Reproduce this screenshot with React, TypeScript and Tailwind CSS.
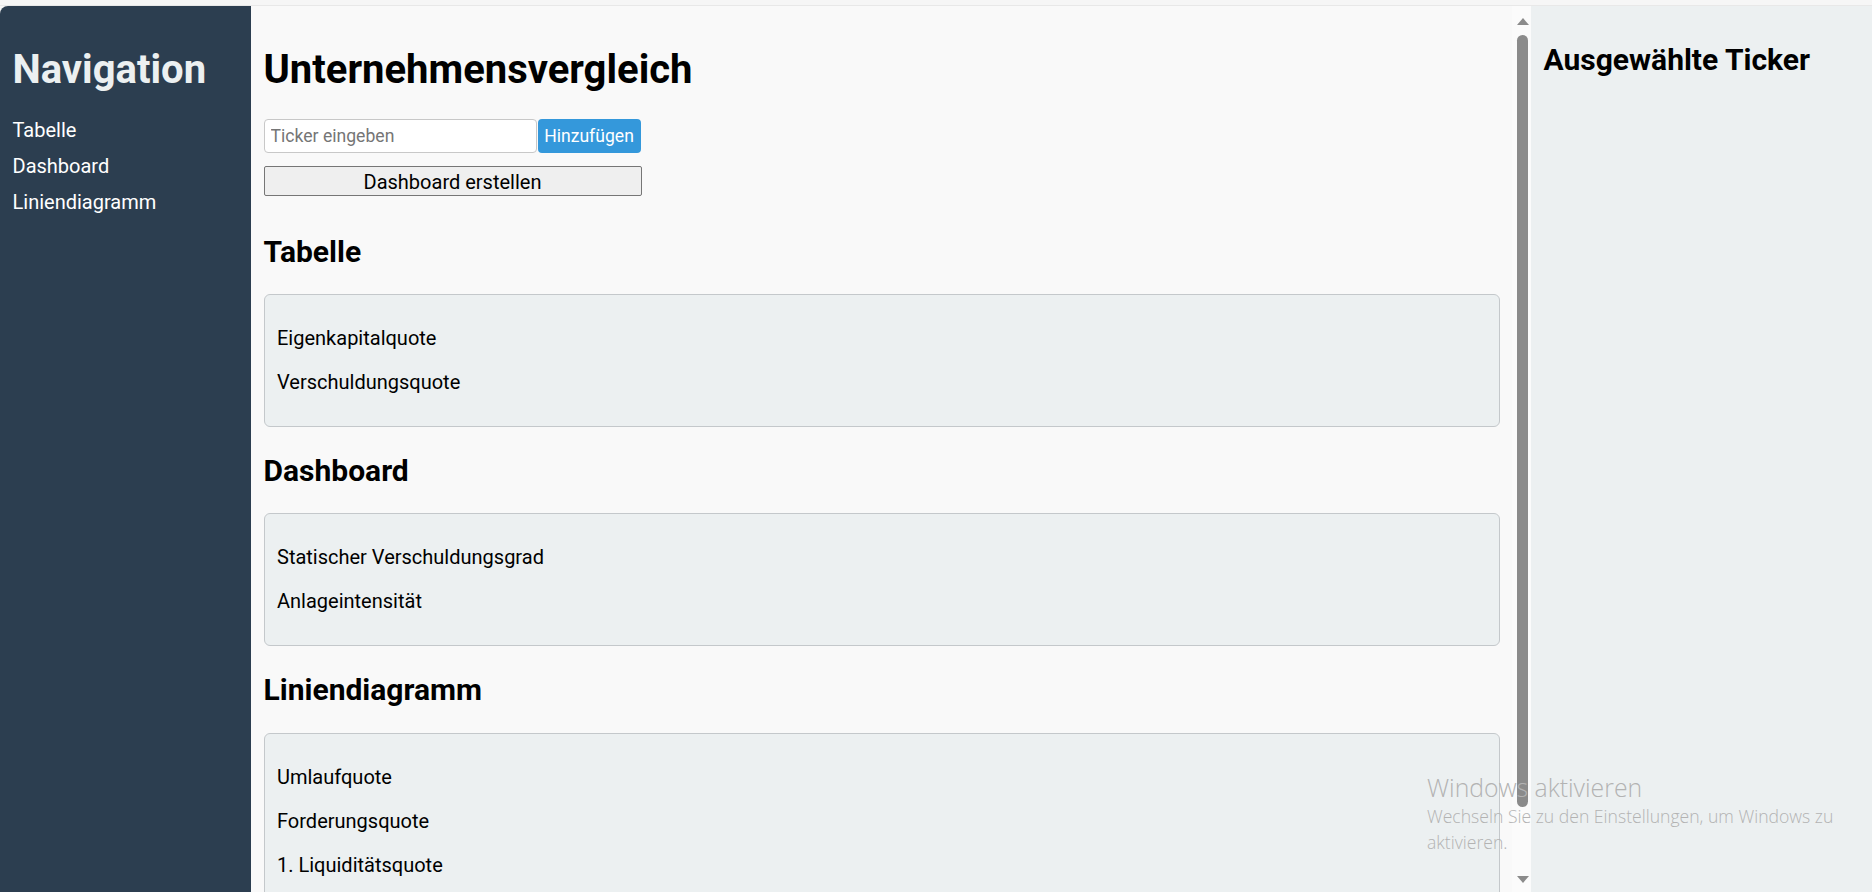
const sections = [
  { title: 'Tabelle', items: ['Eigenkapitalquote', 'Verschuldungsquote'] },
  { title: 'Dashboard', items: ['Statischer Verschuldungsgrad', 'Anlageintensität'] },
  { title: 'Liniendiagramm', items: ['Umlaufquote', 'Forderungsquote', '1. Liquiditätsquote'] },
]

const nav = ['Tabelle', 'Dashboard', 'Liniendiagramm']

function Scrollbar() {
  return (
    <div className="flex h-full w-[19px] shrink-0 flex-col items-center bg-[#fbfbfb] pt-[12px] pb-[9px]">
      <svg width="12" height="7" viewBox="0 0 12 7" className="ml-[2px]">
        <polygon points="6,0 12,7 0,7" fill="#8b8b8b" />
      </svg>
      <div className="mt-[10px] ml-[2px] h-[772px] w-[11px] rounded-full bg-[#8b8b8b]" />
      <div className="flex-1" />
      <svg width="12" height="7" viewBox="0 0 12 7" className="ml-[2px]">
        <polygon points="0,0 12,0 6,7" fill="#8b8b8b" />
      </svg>
    </div>
  )
}

export default function App() {
  return (
    <div className="relative h-[892px] w-full overflow-hidden bg-[#f6f6f6] font-['Roboto',sans-serif] text-black">
      <div className="h-[6px] border-b border-[#e8e8e8]" />
      <div className="flex h-[886px]">
        {/* Sidebar */}
        <aside className="w-[251px] shrink-0 rounded-tl-[8px] bg-[#2c3e50] px-[12.5px] pt-[13px] text-[#ecf0f1]">
          <h1 className="my-[26.8px] text-[40px] leading-[normal] font-bold">Navigation</h1>
          <ul className="-mt-[2px]">
            {nav.map((n) => (
              <li key={n} className="mb-[12px] text-[20px] leading-[normal] text-white">
                {n}
              </li>
            ))}
          </ul>
        </aside>

        {/* Main */}
        <main className="min-w-0 flex-1 overflow-hidden bg-[#f9f9f9] px-[12.5px] pt-[13px]">
          <h1 className="mt-[26.8px] mb-[26.3px] text-[40px] leading-[normal] font-bold">Unternehmensvergleich</h1>
          <div className="w-[378px] pb-[12px]">
            <div className="flex gap-[1px]">
              <input
                placeholder="Ticker eingeben"
                className="h-[34px] w-[273px] rounded-[4px] border border-[#c8c8c8] bg-white px-[6px] text-[17.6px] placeholder:text-[#757575] focus:outline-none"
              />
              <button className="h-[34px] w-[103px] rounded-[4px] bg-[#3498db] text-[17.6px] text-white">
                Hinzufügen
              </button>
            </div>
            <button className="mt-[13px] h-[30px] w-[378px] rounded-[2px] border border-[#767676] bg-[#efefef] text-[20px] text-black">
              Dashboard erstellen
            </button>
          </div>

          {sections.map((s) => (
            <section key={s.title}>
              <h2 className="my-[25.6px] text-[30px] leading-[normal] font-bold">{s.title}</h2>
              <div className="rounded-[6px] border border-[#c4c8cb] bg-[#ecf0f1] px-[12.5px] pt-[11px] pb-[12px]">
                {s.items.map((i) => (
                  <p key={i} className="my-[20px] text-[20px] leading-[normal]">
                    {i}
                  </p>
                ))}
              </div>
            </section>
          ))}
        </main>

        <Scrollbar />

        {/* Right panel */}
        <aside className="w-[341px] shrink-0 bg-[#ecf0f1] px-[12.5px] pt-[11px]">
          <h2 className="my-[25px] text-[30px] leading-[normal] font-bold">Ausgewählte Ticker</h2>
        </aside>
      </div>

      {/* Windows watermark */}
      <div className="pointer-events-none absolute top-[771px] left-[1427px] w-[440px] font-['Open_Sans',sans-serif] font-light text-[#b3b3b3]">
        <div className="text-[24.8px] leading-[32px]">Windows aktivieren</div>
        <div className="text-[17.6px] leading-[26px]">
          Wechseln Sie zu den Einstellungen, um Windows zu aktivieren.
        </div>
      </div>
    </div>
  )
}
